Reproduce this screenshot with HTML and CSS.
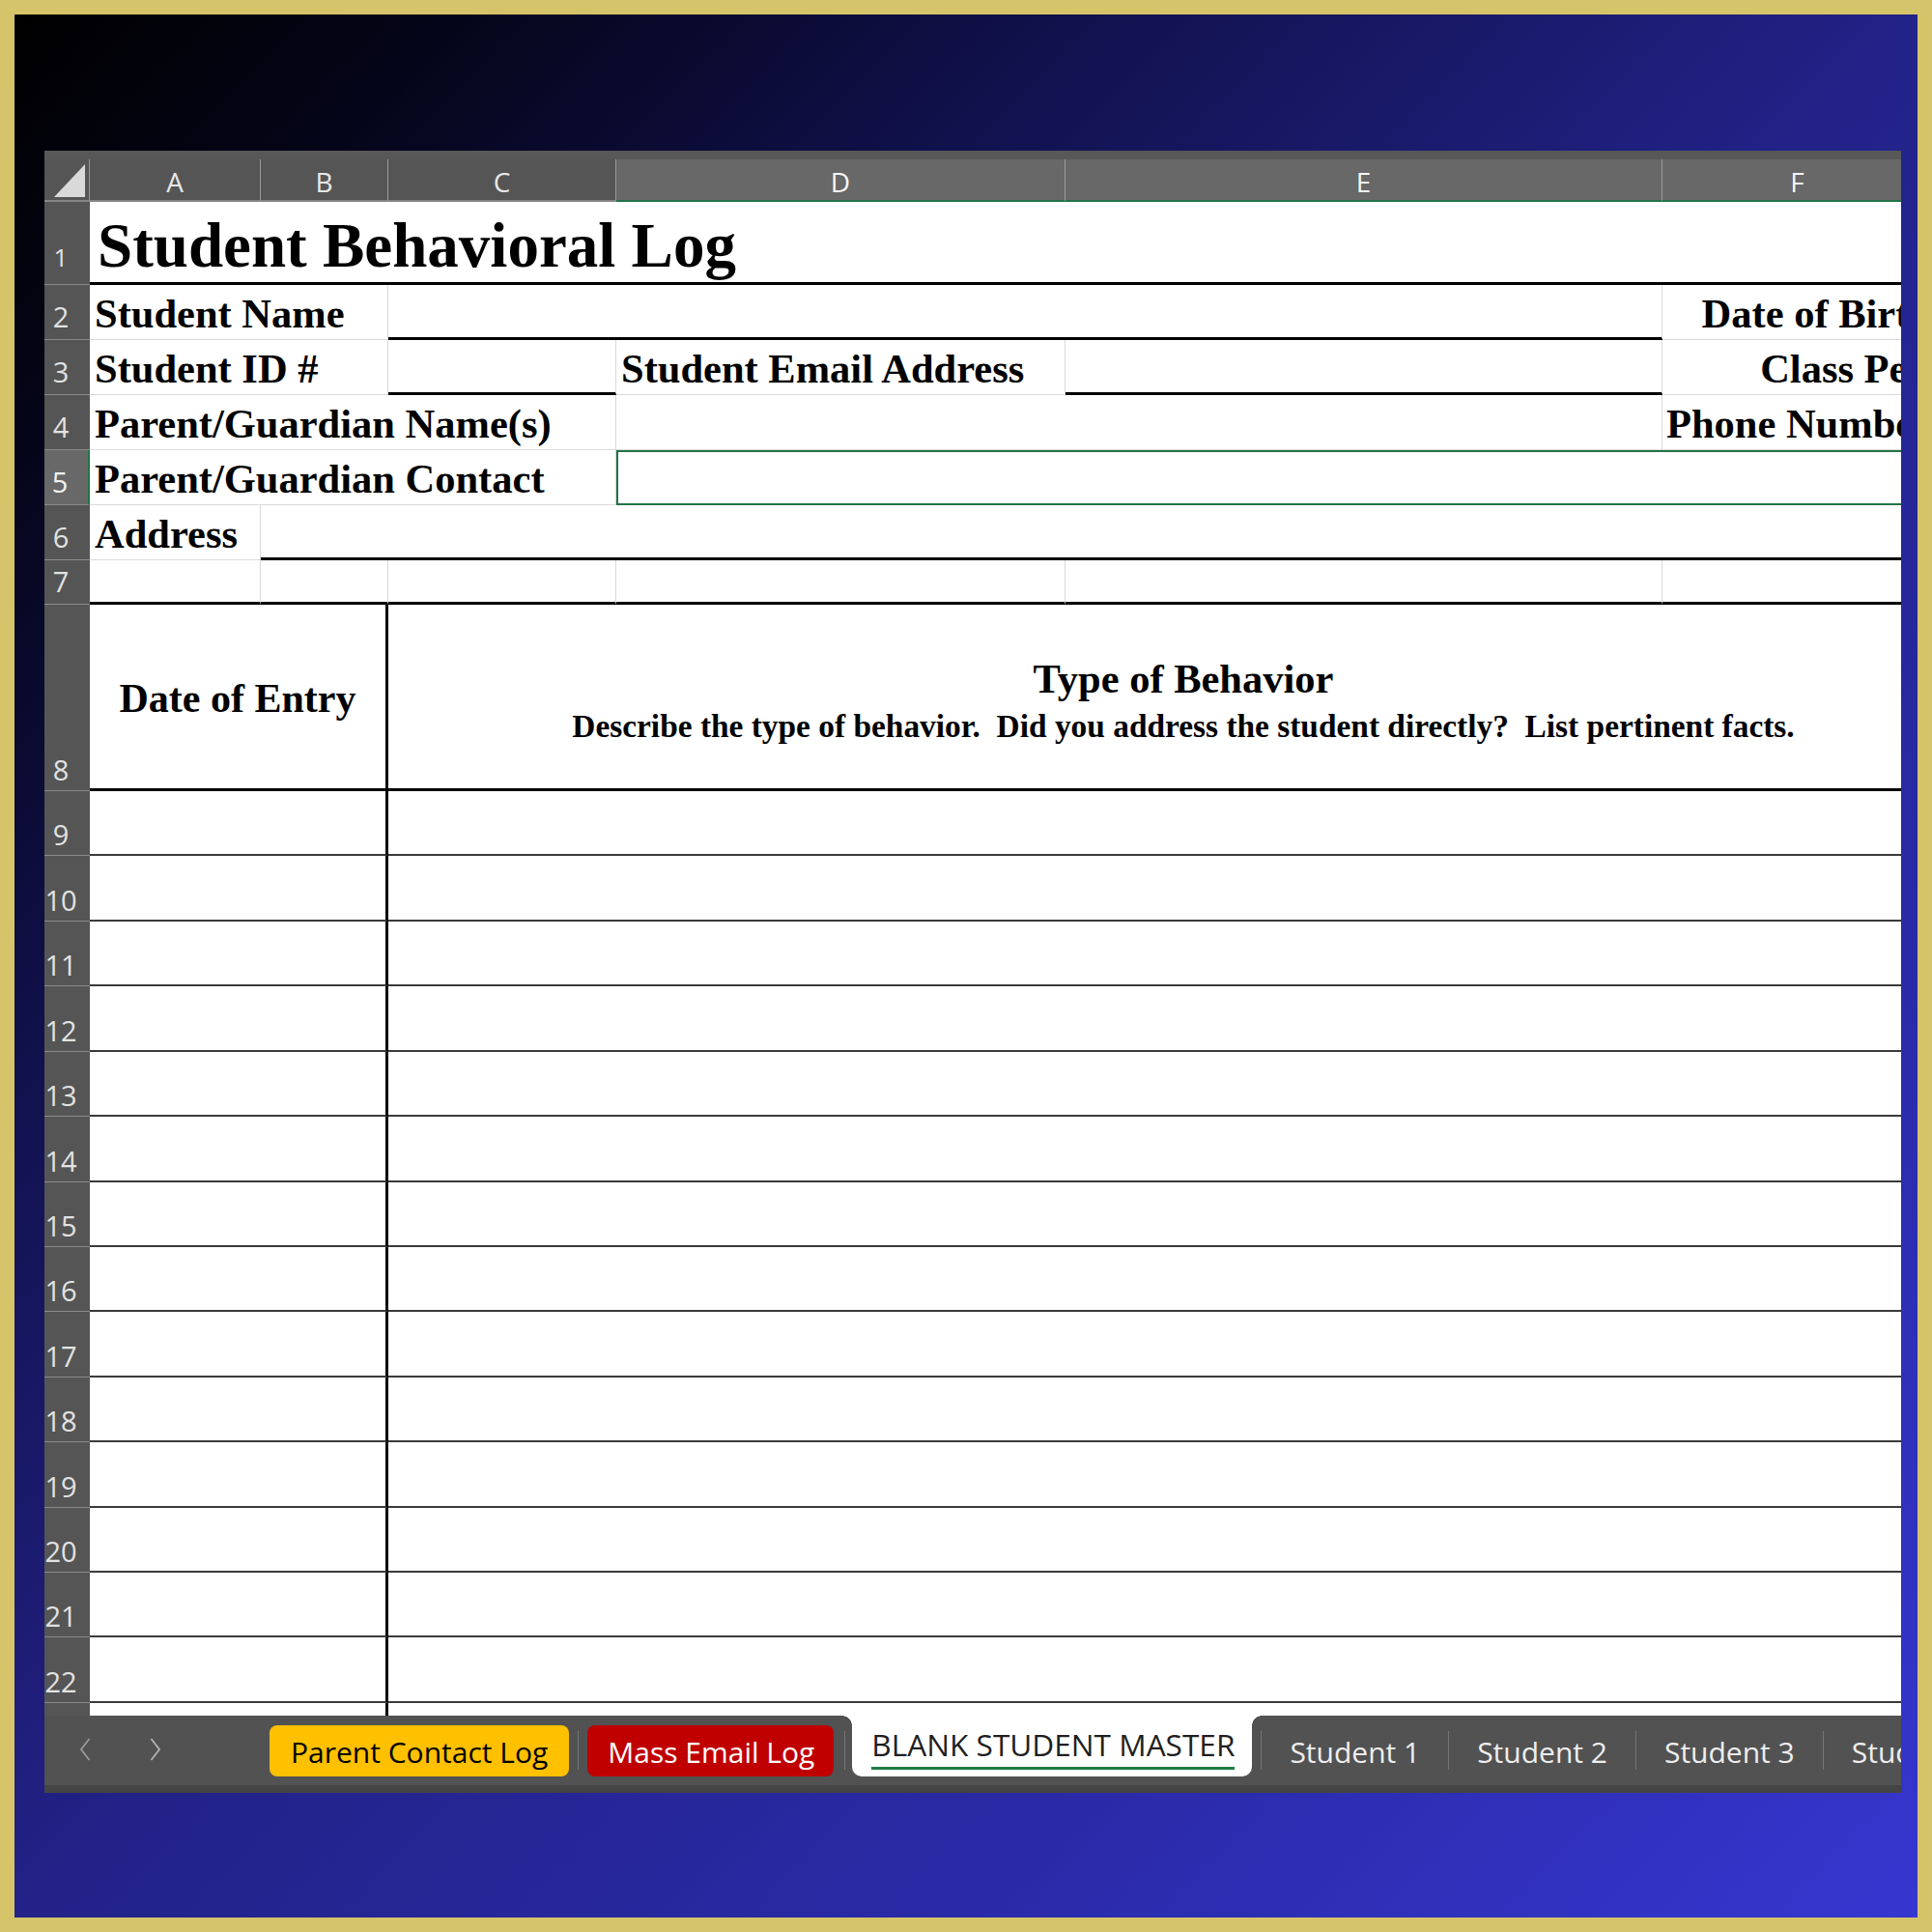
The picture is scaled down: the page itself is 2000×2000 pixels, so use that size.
FILE: index.html
```html
<!DOCTYPE html>
<html>
<head>
<meta charset="utf-8">
<title>Student Behavioral Log</title>
<link rel="stylesheet" href="styles.css">
</head>
<body>
<div class="frame">
  <div class="excel">
    <div class="strip"></div>
    <div class="grid colhead">
      <div class="corner"><svg width="46" height="42" viewBox="0 0 46 42"><polygon points="10,39 42,39 42,5" fill="#d9d9d9"/></svg></div>
      <div class="ch">A</div>
      <div class="ch">B</div>
      <div class="ch">C</div>
      <div class="ch sel">D</div>
      <div class="ch sel">E</div>
      <div class="ch sel">F</div>
      <div class="ch">G</div>
    </div>
    <div class="sheet">
      <div class="grid r1">
        <div class="rh rh1">1</div>
        <div class="c s7 title">Student Behavioral Log</div>
      </div>
      <div class="grid rs">
        <div class="rh">2</div>
        <div class="c s2 lbl">Student Name</div>
        <div class="c s3 bb"></div>
        <div class="c lbl right">Date of Birth</div>
        <div class="c"></div>
      </div>
      <div class="grid rs">
        <div class="rh">3</div>
        <div class="c s2 lbl">Student ID #</div>
        <div class="c bb"></div>
        <div class="c lbl">Student Email Address</div>
        <div class="c bb"></div>
        <div class="c lbl right">Class Per.</div>
        <div class="c"></div>
      </div>
      <div class="grid rs">
        <div class="rh">4</div>
        <div class="c s3 lbl">Parent/Guardian Name(s)</div>
        <div class="c s2"></div>
        <div class="c lbl right">Phone Number</div>
        <div class="c"></div>
      </div>
      <div class="grid rs">
        <div class="rh rh-sel">5</div>
        <div class="c s3 lbl">Parent/Guardian Contact</div>
        <div class="c s3 selbox"></div>
        <div class="c"></div>
      </div>
      <div class="grid rs">
        <div class="rh">6</div>
        <div class="c lbl">Address</div>
        <div class="c s6 bb"></div>
      </div>
      <div class="grid r7">
        <div class="rh">7</div>
        <div class="c bb"></div>
        <div class="c bb"></div>
        <div class="c bb"></div>
        <div class="c bb"></div>
        <div class="c bb"></div>
        <div class="c bb"></div>
        <div class="c bb"></div>
      </div>
      <div class="grid r8">
        <div class="rh rh-low">8</div>
        <div class="s2 entry">Date of Entry</div>
        <div class="s5 type">
          <div class="type-title">Type of Behavior</div>
          <div class="type-sub">Describe the type of behavior.  Did you address the student directly?  List pertinent facts.</div>
        </div>
      </div>
      <div class="grid rl"><div class="rh rh-low">9</div><div class="s2 la"></div><div class="s5 lb"></div></div>
      <div class="grid rl"><div class="rh rh-low">10</div><div class="s2 la"></div><div class="s5 lb"></div></div>
      <div class="grid rl"><div class="rh rh-low">11</div><div class="s2 la"></div><div class="s5 lb"></div></div>
      <div class="grid rl"><div class="rh rh-low">12</div><div class="s2 la"></div><div class="s5 lb"></div></div>
      <div class="grid rl"><div class="rh rh-low">13</div><div class="s2 la"></div><div class="s5 lb"></div></div>
      <div class="grid rl"><div class="rh rh-low">14</div><div class="s2 la"></div><div class="s5 lb"></div></div>
      <div class="grid rl"><div class="rh rh-low">15</div><div class="s2 la"></div><div class="s5 lb"></div></div>
      <div class="grid rl"><div class="rh rh-low">16</div><div class="s2 la"></div><div class="s5 lb"></div></div>
      <div class="grid rl"><div class="rh rh-low">17</div><div class="s2 la"></div><div class="s5 lb"></div></div>
      <div class="grid rl"><div class="rh rh-low">18</div><div class="s2 la"></div><div class="s5 lb"></div></div>
      <div class="grid rl"><div class="rh rh-low">19</div><div class="s2 la"></div><div class="s5 lb"></div></div>
      <div class="grid rl"><div class="rh rh-low">20</div><div class="s2 la"></div><div class="s5 lb"></div></div>
      <div class="grid rl"><div class="rh rh-low">21</div><div class="s2 la"></div><div class="s5 lb"></div></div>
      <div class="grid rl"><div class="rh rh-low">22</div><div class="s2 la"></div><div class="s5 lb"></div></div>
      <div class="grid rt"><div class="rh rh-blank"></div><div class="s2 ta"></div><div class="s5"></div></div>
    </div>
    <div class="tabbar">
      <div class="nav">
        <svg class="arr" width="12" height="24" viewBox="0 0 12 24"><polyline points="10.5,1 2,12 10.5,23" fill="none" stroke="#9a9a9a" stroke-width="1.8"/></svg>
        <svg class="arr arr2" width="12" height="24" viewBox="0 0 12 24"><polyline points="1.5,1 10,12 1.5,23" fill="none" stroke="#b4b4b4" stroke-width="1.8"/></svg>
      </div>
      <div class="tab yellow">Parent Contact Log</div>
      <span class="sep"></span>
      <div class="tab red">Mass Email Log</div>
      <span class="sep sep-b"></span>
      <div class="tab active"><span class="active-label">BLANK STUDENT MASTER</span></div>
      <span class="sep sep-c"></span>
      <div class="tab plain">Student 1</div>
      <span class="sep tight"></span>
      <div class="tab plain">Student 2</div>
      <span class="sep tight"></span>
      <div class="tab plain">Student 3</div>
      <span class="sep tight"></span>
      <div class="tab plain">Student 4</div>
    </div>
  </div>
</div>
</body>
</html>
```

FILE: styles.css
```css
* { box-sizing: border-box; margin: 0; padding: 0; }
html, body { width: 2000px; height: 2000px; }
body { background: #d6c46b; overflow: hidden; }

.frame {
  width: 2000px;
  height: 2000px;
  border: 15px solid #d6c46b;
  background: linear-gradient(135deg, #000000 0%, #05051a 12%, #10104a 27%, #222288 50%, #2a2aa8 75%, #3636d0 100%);
  padding: 141px 0 0 31px;
}

.excel {
  width: 1922px;
  height: 1700px;
  overflow: hidden;
  display: flex;
  flex-direction: column;
  background: #ffffff;
}

.strip { flex: none; height: 9px; background: #585858; }

.grid {
  display: grid;
  grid-template-columns: 47px 177px 132px 236px 465px 618px 280px 47px;
  width: 2002px;
  flex: none;
}

/* column header */
.colhead { height: 44px; background: #555555; }
.corner {
  background: #555555;
  border-right: 1px solid #9a9a9a;
  border-bottom: 2px solid #858585;
  display: flex;
}
.ch {
  font: 28px/1 "Open Sans", "Noto Sans", sans-serif;
  color: #e8e8e8;
  display: flex;
  align-items: flex-end;
  justify-content: center;
  padding-bottom: 5px;
  border-right: 1px solid #9a9a9a;
  border-bottom: 2px solid #858585;
}
.ch.sel {
  background: #686868;
  color: #f6f6f6;
  border-bottom: 2px solid #217346;
}

/* sheet */
.sheet { flex: none; height: 1567px; display: flex; flex-direction: column; background: #fff; }
.r1 { height: 86px; }
.rs { height: 57px; }
.r7 { height: 46px; }
.r8 { height: 193px; }
.rl { height: 67.43px; }
.rt { height: 13px; }

.rh {
  background: #555555;
  color: #e2e2e2;
  font: 29px/1 "Open Sans", "Noto Sans", sans-serif;
  display: flex;
  align-items: flex-end;
  justify-content: center;
  padding: 0 13px 9px 0;
  border-bottom: 1px solid #8a8a8a;
  white-space: nowrap;
}
.rh1 { padding-bottom: 15px; font-size: 26px; }
.rh-low { padding-bottom: 7px; }
.rh-sel { background: #686868; color: #f2f2f2; border-right: 2px solid #217346; }
.rh-blank { border-bottom: none; }

.s2 { grid-column: span 2; }
.s3 { grid-column: span 3; }
.s5 { grid-column: span 5; }
.s6 { grid-column: span 6; }
.s7 { grid-column: span 7; }

.c {
  border-right: 1px solid #dadada;
  border-bottom: 1px solid #dadada;
}
.bb { border-bottom: 3px solid #000000; }

.title {
  font: 700 65px/1 "Liberation Serif", "Times New Roman", serif;
  color: #000;
  display: flex;
  align-items: flex-end;
  padding: 0 0 5px 8px;
  border-right: none;
  border-bottom: 3px solid #000000;
  white-space: nowrap;
}

.lbl {
  font: 700 42.5px/1 "Liberation Serif", "Times New Roman", serif;
  color: #000;
  display: flex;
  align-items: flex-end;
  padding: 0 0 5px 5px;
  white-space: nowrap;
}
.lbl.right { justify-content: flex-end; padding-right: 0; padding-left: 0; }

.selbox { border: 2px solid #217346; }

.entry {
  font: 700 42px/1 "Liberation Serif", "Times New Roman", serif;
  color: #000;
  display: flex;
  align-items: center;
  justify-content: center;
  padding-top: 4px;
  border-right: 3px solid #000;
  border-bottom: 3px solid #000;
  white-space: nowrap;
}
.type {
  display: flex;
  flex-direction: column;
  align-items: center;
  justify-content: center;
  padding-top: 8px;
  border-bottom: 3px solid #000;
  color: #000;
  white-space: pre;
}
.type-title { font: 700 42.5px/1 "Liberation Serif", "Times New Roman", serif; }
.type-sub { font: 700 33.4px/1 "Liberation Serif", "Times New Roman", serif; margin-top: 11px; }

.la { border-right: 3px solid #000; border-bottom: 2px solid #3a3a3a; }
.lb { border-bottom: 2px solid #3a3a3a; }
.ta { border-right: 3px solid #000; }

/* sheet tabs */
.tabbar {
  flex: none;
  height: 80px;
  background: #525252;
  border-bottom: 8px solid #444444;
  display: flex;
  align-items: flex-start;
  overflow: hidden;
  font-family: "Open Sans", "Noto Sans", sans-serif;
  font-size: 30px;
}
.tabbar > * { flex: none; }
.nav { width: 233px; height: 72px; display: flex; align-items: flex-start; }
.arr { margin: 23px 0 0 36px; }
.arr2 { margin-left: 61px; }

.tab { white-space: nowrap; }
.yellow, .red, .plain {
  margin-top: 10px;
  height: 53px;
  line-height: 50px;
  padding-top: 3px;
}
.yellow { background: #ffc000; color: #000; border-radius: 8px; padding-left: 22px; padding-right: 22px; }
.red { background: #c00000; color: #fff; border-radius: 8px; padding-left: 21px; padding-right: 20px; }
.plain { color: #eeeeee; padding-left: 29px; padding-right: 29px; }

.sep { width: 1px; height: 40px; margin: 16px 9px 0; background: #767676; }
.sep-b { margin-left: 11px; margin-right: 7px; }
.sep-c { margin-left: 9px; margin-right: 0; }
.sep.tight { margin-left: 0; margin-right: 0; }

.active {
  position: relative;
  background: #ffffff;
  color: #1f1f1f;
  height: 63px;
  padding: 8px 18px 0 20px;
  border-radius: 0 0 10px 10px;
  line-height: normal;
  font-size: 31.6px;
}
.active-label {
  display: inline-block;
  padding-bottom: 2px;
  border-bottom: 3px solid #1e7b45;
}
.active::before,
.active::after {
  content: "";
  position: absolute;
  top: 0;
  width: 10px;
  height: 10px;
}
.active::before { left: -10px; background: radial-gradient(circle at 0 100%, #525252 9.5px, #ffffff 10px); }
.active::after { right: -10px; background: radial-gradient(circle at 100% 100%, #525252 9.5px, #ffffff 10px); }
```
